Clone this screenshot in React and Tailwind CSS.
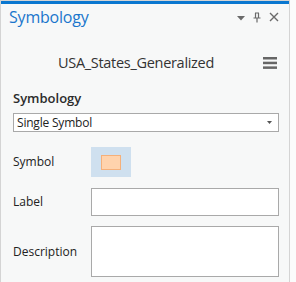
import React from "react";

const font = { fontFamily: '"Segoe UI", "Open Sans", "Noto Sans", sans-serif' };

const SymbologyPane = () => {
  return (
    <div className="w-[296px] h-[282px] flex bg-[#fbfbfb] overflow-hidden" style={font}>
      <div className="w-[290px] h-full flex flex-col border-l border-t border-r border-[#d4d4d4] bg-[#f7f8f8]">
        <div className="h-[3px] bg-[#0a77d0]" />

        {/* header */}
        <div className="flex items-center h-[26px] pl-[8px] pr-[10px]">
          <span className="text-[16px] leading-none text-[#1a76cc] tracking-[-0.2px]">Symbology</span>
          <div className="ml-auto flex items-center gap-[8px] text-[#6a6a6a]">
            <svg width="8" height="5" viewBox="0 0 8 5" className="mt-[2px]">
              <path d="M0 0h8L4 4.5z" fill="#6a6a6a" />
            </svg>
            <svg width="8" height="11" viewBox="0 0 8 11">
              <path d="M2 1h4M2.5 1v5M5.5 1v5M0.5 6h7M4 6v4.5" stroke="#6a6a6a" strokeWidth="1.2" fill="none" />
            </svg>
            <svg width="10" height="10" viewBox="0 0 10 10">
              <path d="M1 1l8 8M9 1l-8 8" stroke="#6a6a6a" strokeWidth="1.4" />
            </svg>
          </div>
        </div>

        {/* layer name */}
        <div className="flex items-center mt-[22px] h-[22px] pr-[12px]">
          <span className="flex-1 text-center pl-[8px] text-[14.5px] text-[#333] tracking-[-0.3px]">
            USA_States_Generalized
          </span>
          <svg width="14" height="12" viewBox="0 0 14 12">
            <rect x="0" y="0" width="14" height="2.5" fill="#666" />
            <rect x="0" y="4.7" width="14" height="2.5" fill="#666" />
            <rect x="0" y="9.4" width="14" height="2.5" fill="#666" />
          </svg>
        </div>

        {/* symbology section */}
        <div className="pl-[12px] pr-[10px] mt-[16px]">
          <div className="text-[13px] font-semibold text-[#2b2b2b] leading-[16px]">Symbology</div>
          <div className="mt-[7px] h-[19px] bg-white border border-[#a9a9a9] flex items-center pl-[3px] pr-[6px]">
            <span className="text-[12px] text-[#222] tracking-[-0.2px]">Single Symbol</span>
            <svg width="5" height="3" viewBox="0 0 5 3" className="ml-auto">
              <path d="M0 0h5L2.5 3z" fill="#555" />
            </svg>
          </div>

          <div className="flex items-center mt-[15px]">
            <span className="w-[78px] text-[12px] text-[#222]">Symbol</span>
            <div className="w-[40px] h-[30px] bg-[#cfe0ef] flex items-center justify-center">
              <div className="w-[20px] h-[15px] bg-[#ffd3ad] border border-[#f5b07a]" />
            </div>
          </div>

          <div className="flex items-center mt-[11px]">
            <span className="w-[78px] text-[12px] text-[#222]">Label</span>
            <div className="flex-1 h-[28px] bg-white border border-[#a9a9a9]" />
          </div>

          <div className="flex items-center mt-[10px]">
            <span className="w-[78px] text-[12px] text-[#222]">Description</span>
            <div className="flex-1 h-[51px] bg-white border border-[#a9a9a9]" />
          </div>
        </div>
      </div>
    </div>
  );
};

export default function App() {
  return <SymbologyPane />;
}
